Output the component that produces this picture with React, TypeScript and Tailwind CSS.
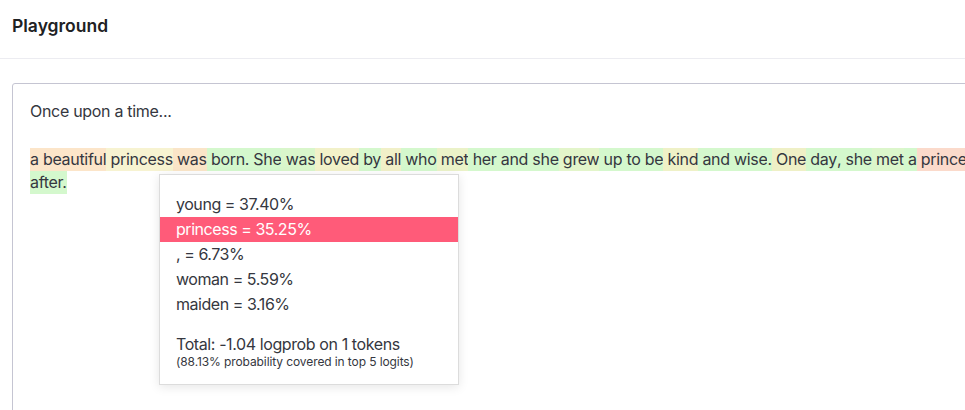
import React from "react";

const G = "#d4f8cd";
const line1: [string, string][] = [
  ["a", "#fce5c9"],
  [" beautiful", "#fce5c9"],
  [" princess", "#f7f3d1"],
  [" was", "#fae5c8"],
  [" born", G],
  [".", G],
  [" She", G],
  [" was", "#d9f6cb"],
  [" loved", "#f2f1c9"],
  [" by", G],
  [" all", "#f1f0c8"],
  [" who", G],
  [" met", "#ebf2c8"],
  [" her", G],
  [" and", G],
  [" she", G],
  [" grew", "#e3f5ca"],
  [" up", G],
  [" to", G],
  [" be", G],
  [" kind", "#eff1c7"],
  [" and", G],
  [" wise", G],
  [".", G],
  [" One", "#eff0c6"],
  [" day", G],
  [",", G],
  [" she", G],
  [" met", "#dcf6cb"],
  [" a", G],
  [" prince", "#fbdacb"],
  [" and", G],
  [" they", G],
  [" lived", G],
  [" happily", G],
  [" ever", G],
];

const items = [
  ["young = 37.40%", false],
  ["princess = 35.25%", true],
  [", = 6.73%", false],
  ["woman = 5.59%", false],
  ["maiden = 3.16%", false],
] as const;

export default function App() {
  return (
    <div
      className="w-[965px] h-[410px] overflow-hidden bg-white text-[#353740]"
      style={{ fontFamily: "Inter, 'Noto Sans', sans-serif" }}
    >
      <div className="h-[59px] border-b border-[#ececf1] flex items-center px-3">
        <h1 className="text-[17.5px] font-semibold text-[#202123] leading-none -mt-[6px]">Playground</h1>
      </div>
      <div className="pl-3 pt-[24px]">
        <div className="relative w-[1400px] h-[400px] border border-[#c5c5d2] rounded-[3px] pl-[17px] pt-[15px] tracking-[-0.3px]">
          <div className="text-[16px] leading-[24px]">Once upon a time...</div>
          <div className="mt-[25px] text-[16px]">
            <div className="flex h-[23px] leading-[23px] whitespace-pre">
              {line1.map(([t, c], i) => (
                <span key={i} className="inline-block h-[23px]" style={{ backgroundColor: c }}>
                  {t}
                </span>
              ))}
            </div>
            <div className="flex h-[23px] leading-[23px] whitespace-pre">
              <span className="inline-block h-[23px]" style={{ backgroundColor: G }}>
                after.
              </span>
            </div>
          </div>
          <div className="absolute left-[146px] top-[90px] w-[300px] h-[211px] bg-white border border-[#dcdcdc] shadow-[0_2px_10px_rgba(0,0,0,0.10)] pt-[17px]">
            {items.map(([t, hl], i) => (
              <div
                key={i}
                className={
                  "h-[25px] leading-[25px] px-4 text-[16px] tracking-[-0.45px] " +
                  (hl ? "bg-[#ff5b79] text-white" : "text-[#353740]")
                }
              >
                {t}
              </div>
            ))}
            <div className="px-4 mt-[17px] text-[16px] leading-[20px] tracking-[-0.4px]">Total: -1.04 logprob on 1 tokens</div>
            <div className="px-4 text-[12px] leading-[15px] tracking-[-0.1px] text-[#353740]">
              (88.13% probability covered in top 5 logits)
            </div>
          </div>
        </div>
      </div>
    </div>
  );
}
